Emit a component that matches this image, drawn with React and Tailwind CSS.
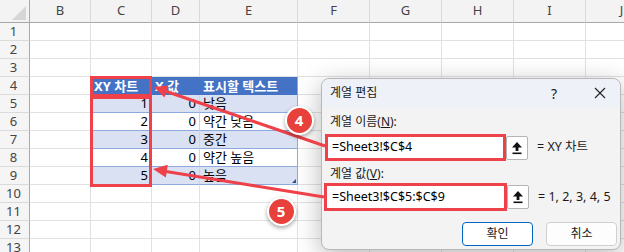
import React from "react";

const COLS = ["B", "C", "D", "E", "F", "G", "H", "I", "J"];
const DATA = {
  5: ["1", "0", "낮음"],
  6: ["2", "0", "약간 낮음"],
  7: ["3", "0", "중간"],
  8: ["4", "0", "약간 높음"],
  9: ["5", "0", "높음"],
};

const FONT = { fontFamily: "'Noto Sans', 'Noto Sans CJK KR', sans-serif" };

function DataCell({ r, ci }) {
  // ci: 0=B ... 8=J
  if (r === 4 && ci >= 1 && ci <= 3) {
    const txt = ["XY 차트", "X 값", "표시할 텍스트"][ci - 1];
    return (
      <div className={"flex items-end bg-[#4472c4] text-white font-bold text-[13px] leading-[17px] pl-[3px] border-r " + (ci === 3 ? "border-[#8ea9db]" : "border-[#4472c4]")}>
        <span className="whitespace-nowrap">{txt}</span>
      </div>
    );
  }
  if (r >= 5 && r <= 9 && ci >= 1 && ci <= 3) {
    const band = r % 2 === 1 ? "bg-[#d9e1f2]" : "bg-white";
    const v = DATA[r][ci - 1];
    const align = ci === 3 ? "justify-start pl-[3px]" : "justify-end pr-[3px]";
    const right = ci === 3 ? "border-[#8ea9db]" : "border-[#d4d4d4]";
    return (
      <div className={"relative flex items-end text-[13px] leading-[17px] text-black border-b border-b-[#8ea9db] border-r " + band + " " + align + " " + right}>
        <span className="whitespace-nowrap">{v}</span>
        {r === 9 && ci === 3 && (
          <svg className="absolute right-[1px] bottom-[1px]" width="4" height="4" viewBox="0 0 4 4">
            <polygon points="4,0 4,4 0,4" fill="#2f4f8f" />
          </svg>
        )}
      </div>
    );
  }
  return <div className="bg-white border-r border-b border-[#e1e1e1]" />;
}

function Sheet() {
  const rows = [];
  for (let r = 1; r <= 13; r++) rows.push(r);
  return (
    <div className="grid grid-cols-[30px_61px_61px_48px_98px_72px_72px_72px_72px_72px] grid-rows-[23px_repeat(13,18px)] w-[658px]" style={FONT}>
      <div className="relative bg-[#f3f3f3] border-r border-b border-[#a8a8a8]">
        <svg className="absolute left-[11px] top-[5px]" width="16" height="16" viewBox="0 0 16 16">
          <polygon points="15,1 15,15 1,15" fill="#d6d6d6" />
        </svg>
      </div>
      {COLS.map((c) => (
        <div key={c} className="flex items-center justify-center bg-[#f3f3f3] border-r border-r-[#d8d8d8] border-b border-b-[#a8a8a8] text-[13px] text-[#444]">
          {c}
        </div>
      ))}
      {rows.map((r) => (
        <React.Fragment key={r}>
          <div className="flex items-center justify-center bg-[#f5f5f5] border-r border-r-[#a8a8a8] border-b border-b-[#dadada] text-[13px] text-[#444] pr-[2px]">
            {r}
          </div>
          {COLS.map((c, ci) => (
            <DataCell key={c} r={r} ci={ci} />
          ))}
        </React.Fragment>
      ))}
    </div>
  );
}

function UploadBtn() {
  return (
    <div className="flex items-center justify-center w-[22px] h-[24px] bg-white border border-[#b5b5b5] rounded-[2px]">
      <svg width="12" height="14" viewBox="0 0 12 14">
        <polygon points="6,1 11,6.5 7.4,6.5 7.4,10 4.6,10 4.6,6.5 1,6.5" fill="#111" />
        <rect x="1.5" y="11.5" width="9" height="1.6" fill="#111" />
      </svg>
    </div>
  );
}

function Dialog() {
  return (
    <div className="absolute left-[321px] top-[78px] w-[300px] h-[172px] rounded-[8px] border border-[#b8b8b8] bg-[#f3f3f3] shadow-[0_6px_26px_rgba(0,0,0,0.28)] flex flex-col text-[12px] text-[#1a1a1a]" style={FONT}>
      <div className="h-[28px] flex items-center rounded-t-[8px] bg-[#eef2f8]">
        <span className="pl-[8px]">계열 편집</span>
        <div className="ml-auto flex items-center">
          <span className="w-[16px] text-center text-[14px]">?</span>
          <div className="ml-[18px] w-[40px] flex justify-center">
            <svg width="12" height="12" viewBox="0 0 12 12">
              <path d="M1 1 L11 11 M11 1 L1 11" stroke="#222" strokeWidth="1.1" />
            </svg>
          </div>
        </div>
      </div>
      <div className="mt-[7px] h-[16px] pl-[8px] flex items-center">
        계열 이름(<span className="underline">N</span>):
      </div>
      <div className="mt-[4px] h-[27px] pl-[3px] flex items-center">
        <div className="w-[181px] h-[27px] border-[3px] border-[#ee4149] bg-white flex items-center pl-[4px] text-[12.5px] text-black">
          =Sheet3!$C$4
        </div>
        <UploadBtn />
        <span className="ml-[9px] text-[12.5px]">= XY 차트</span>
      </div>
      <div className="mt-[5px] h-[16px] pl-[8px] flex items-center">
        계열 값(<span className="underline">V</span>):
      </div>
      <div className="mt-[1px] h-[28px] pl-[2px] flex items-center">
        <div className="w-[183px] h-[28px] border-[3px] border-[#ee4149] bg-white flex items-center pl-[5px] text-[12.5px] text-black">
          =Sheet3!$C$5:$C$9
        </div>
        <UploadBtn />
        <span className="ml-[9px] text-[12.5px]">= 1, 2, 3, 4, 5</span>
      </div>
      <div className="mt-[11px] flex justify-end gap-[13px] pr-[3px]">
        <div className="w-[71px] h-[24px] flex items-center justify-center bg-white border border-[#0067c0] rounded-[4px]">
          확인
        </div>
        <div className="w-[71px] h-[24px] flex items-center justify-center bg-[#fdfdfd] border border-[#d0d0d0] rounded-[4px]">
          취소
        </div>
      </div>
    </div>
  );
}

function Badge({ n, x, y }) {
  return (
    <div
      className="absolute w-[29px] h-[29px] rounded-full bg-[#e8413c] border-2 border-white shadow-[0_2px_4px_rgba(0,0,0,0.35)] flex items-center justify-center text-white font-bold text-[15px]"
      style={{ left: x - 14.5, top: y - 14.5, ...FONT }}
    >
      {n}
    </div>
  );
}

export default function App() {
  return (
    <div className="relative w-[624px] h-[252px] overflow-hidden bg-white">
      <Sheet />
      {/* red highlight boxes on column C */}
      <div className="absolute left-[90px] top-[76px] w-[62px] h-[21px] border-[3px] border-[#ee4149]" />
      <div className="absolute left-[90px] top-[96px] w-[62px] h-[91px] border-[3px] border-[#ee4149]" />
      <Dialog />
      <svg className="absolute left-0 top-0" width="624" height="252" viewBox="0 0 624 252">
        <line x1="325" y1="146" x2="165" y2="91" stroke="#ee4149" strokeWidth="3" />
        <polygon points="154,87 168.5,85.5 164.5,97.5" fill="#ee4149" />
        <line x1="324" y1="197" x2="166" y2="171.5" stroke="#ee4149" strokeWidth="3" />
        <polygon points="153,169 167.8,164.8 165.8,177.4" fill="#ee4149" />
      </svg>
      <Badge n="4" x={299} y={120} />
      <Badge n="5" x={281} y={211} />
    </div>
  );
}
